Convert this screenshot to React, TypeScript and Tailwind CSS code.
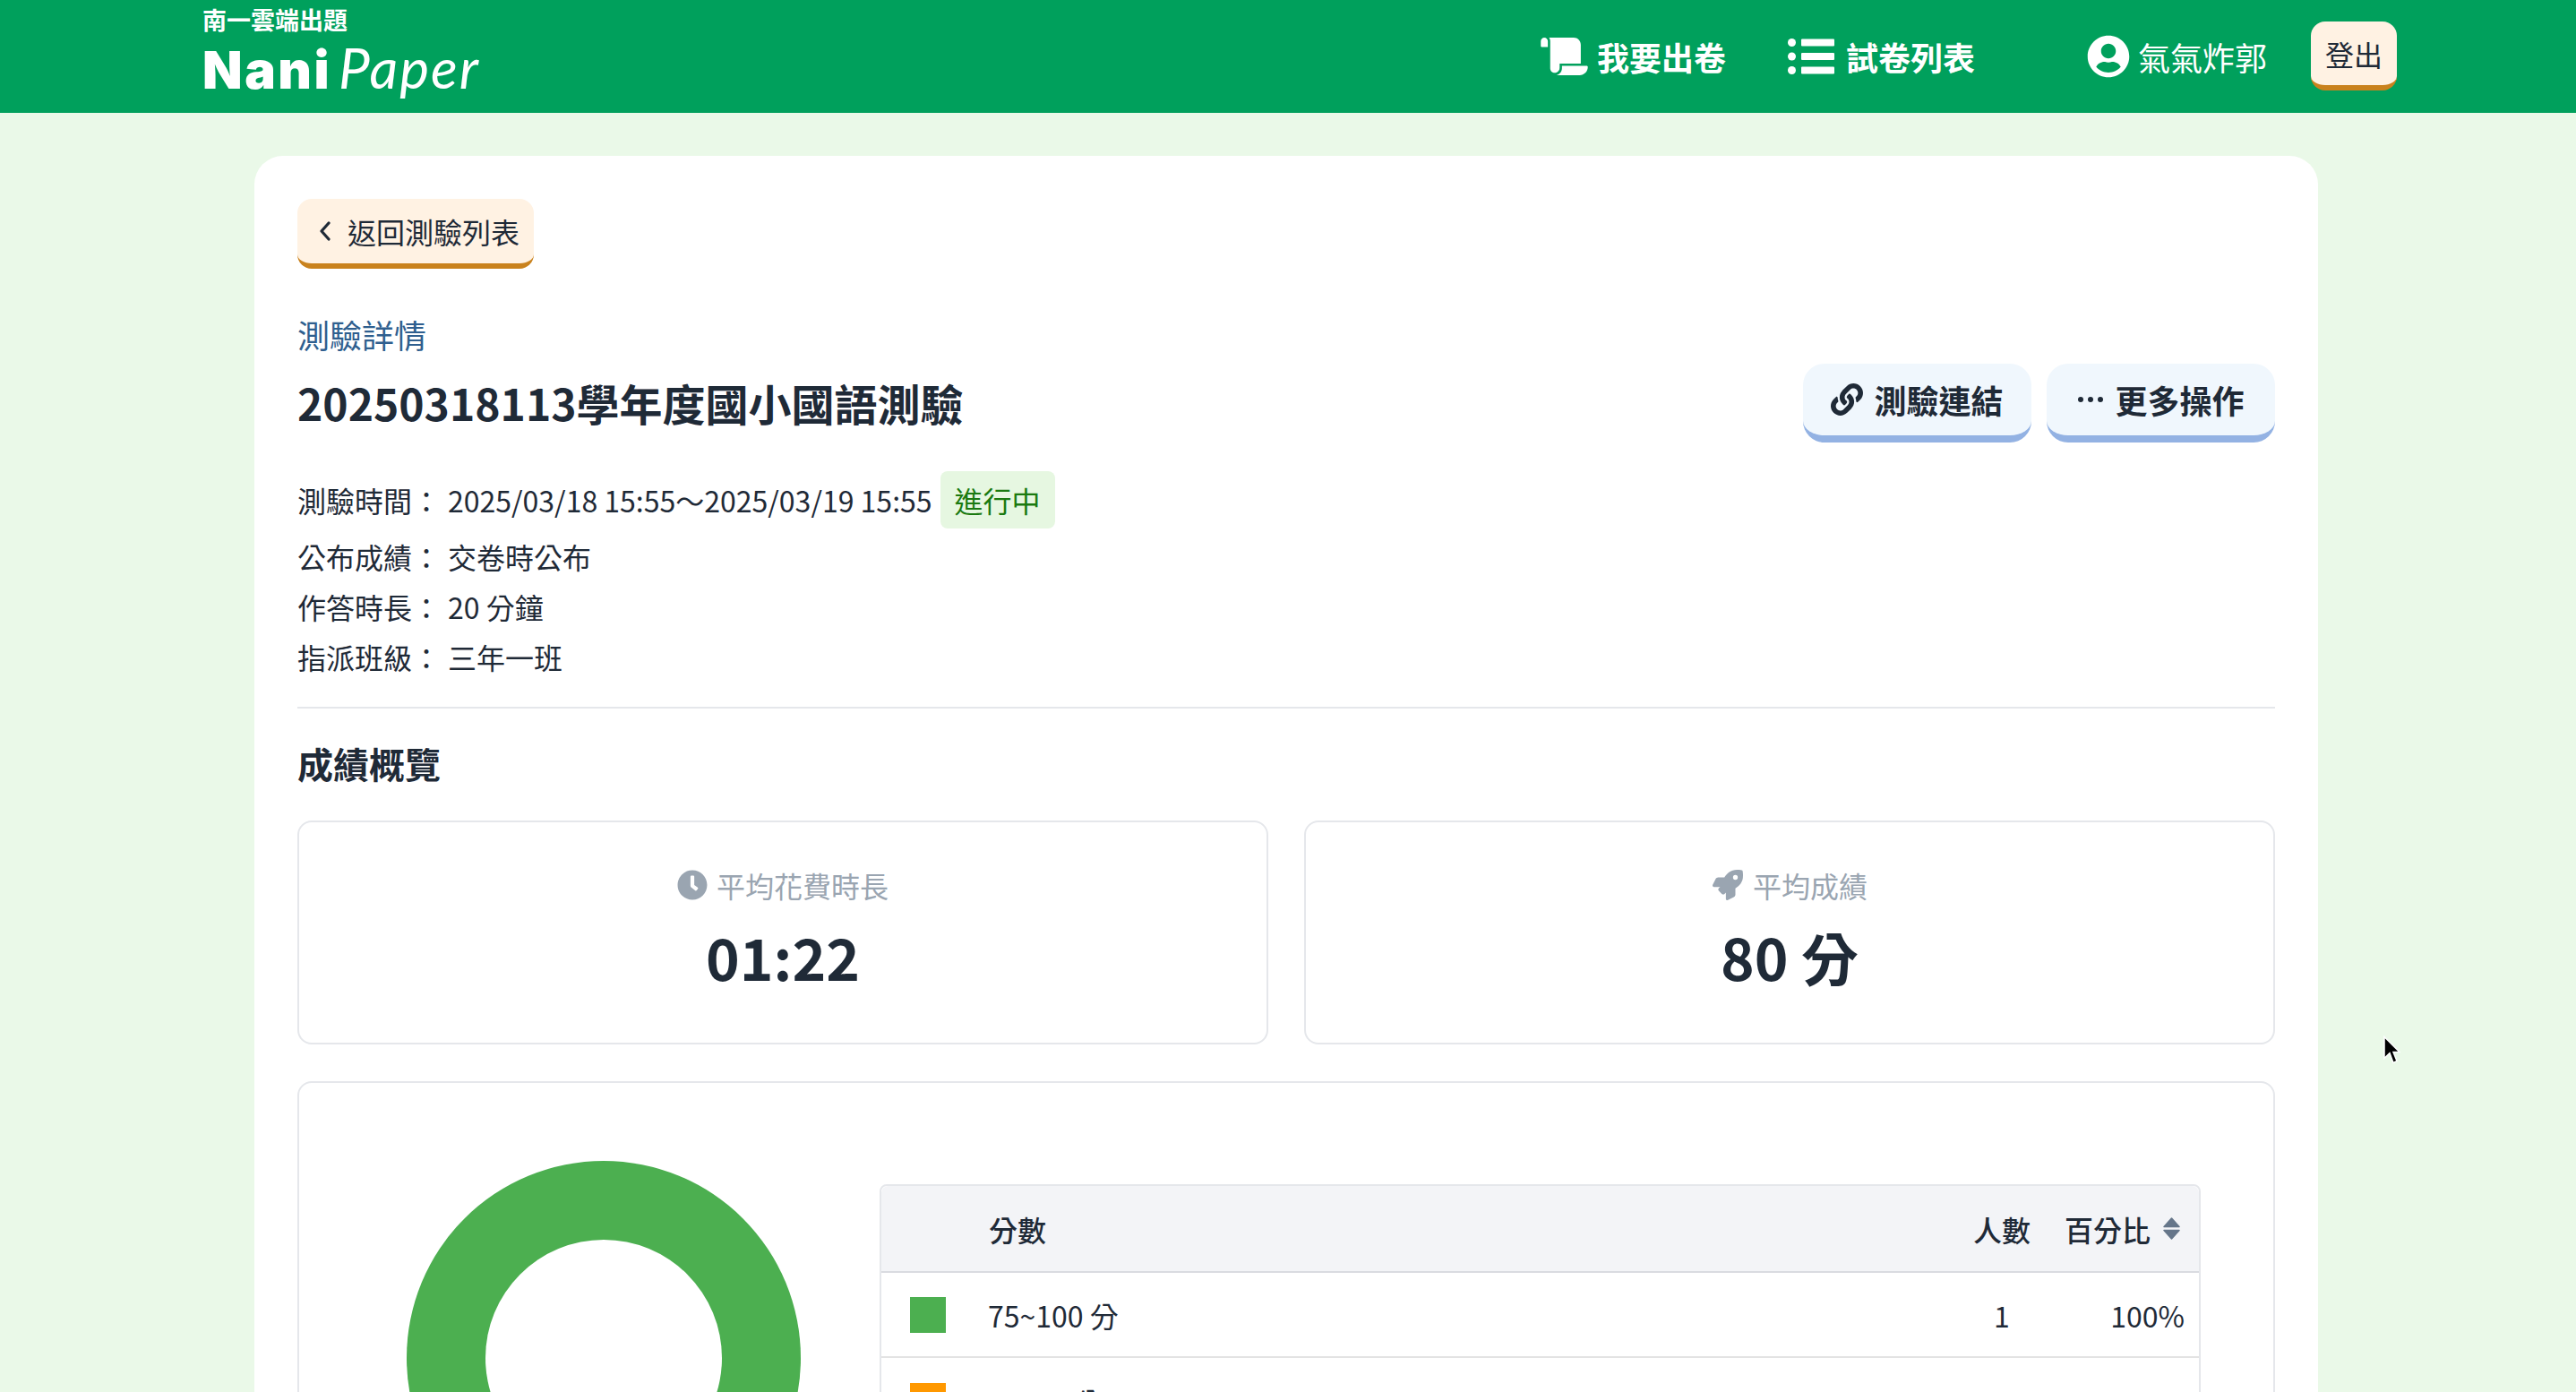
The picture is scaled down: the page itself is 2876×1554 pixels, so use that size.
import type { ReactNode } from 'react'
import { FaClock, FaLink, FaRocket, FaScroll, FaUserCircle } from 'react-icons/fa'

const CJK = "font-['Noto_Sans_CJK_TC','Noto_Sans',sans-serif]"

function NavLink({ icon, label }: { icon: ReactNode; label: string }) {
  return (
    <a className="flex items-center gap-[13px] text-[36px] leading-none font-bold text-white">
      {icon}
      <span>{label}</span>
    </a>
  )
}

function Logo() {
  return (
    <div className="mb-[17px] flex flex-col text-white">
      <span className="h-[26px] text-[27px] leading-[26px] font-bold">南一雲端出題</span>
      <div className="mt-[15px] flex h-[50px] items-baseline leading-[50px]">
        <span className="font-['Inter',sans-serif] text-[58px] font-black tracking-[2.5px]">Nani</span>
        <span className="ml-[8px] font-['Lato',sans-serif] text-[62px] font-normal tracking-[2px] italic">Paper</span>
      </div>
    </div>
  )
}

function ListIcon() {
  return (
    <svg className="h-[40px] w-[52px]" viewBox="0 0 52 40" fill="currentColor">
      <circle cx="4.5" cy="4.5" r="4.5" />
      <circle cx="4.5" cy="20" r="4.5" />
      <circle cx="4.5" cy="35.5" r="4.5" />
      <rect x="15" y="0.5" width="37" height="8" rx="1" />
      <rect x="15" y="16" width="37" height="8" rx="1" />
      <rect x="15" y="31.5" width="37" height="8" rx="1" />
    </svg>
  )
}

function BlueButton({ icon, label }: { icon: ReactNode; label: string }) {
  return (
    <button className="flex h-[88px] w-[255px] items-center justify-center gap-[12px] rounded-[24px] border-b-[8px] border-[#93b2e3] bg-[#f0f7fd] text-[36px] font-semibold text-[#1f2a37]">
      {icon}
      <span>{label}</span>
    </button>
  )
}

function InfoRow({ label, children, className }: { label: string; children: ReactNode; className?: string }) {
  return (
    <div className={`flex items-center text-[32px] leading-[48px] ${className ?? ''}`}>
      <span className="w-[168px] shrink-0">{label}：</span>
      {children}
    </div>
  )
}

function StatCard({ icon, label, value }: { icon: ReactNode; label: string; value: string }) {
  return (
    <div className="flex h-[250px] flex-1 flex-col items-center rounded-[16px] border-2 border-[#e5e7eb] pt-[46px]">
      <div className="flex h-[48px] items-center gap-[10px] text-[32px] text-[#9aa5b1]">
        {icon}
        <span>{label}</span>
      </div>
      <div className="mt-[7px] text-[64px] leading-[96px] font-bold text-[#1f2a37]">{value}</div>
    </div>
  )
}

function ScoreRow({
  color,
  label,
  count,
  percent,
  className,
}: {
  color: string
  label: string
  count: number
  percent: string
  className?: string
}) {
  return (
    <div className={`flex h-[95px] items-center border-b-2 border-[#e3e3e3] pr-[16px] text-[32px] ${className ?? ''}`}>
      <span className={`ml-[32px] h-[40px] w-[40px] ${color}`} />
      <span className="ml-[47px] flex-1">{label}</span>
      <span className="w-[60px] text-center">{count}</span>
      <span className="w-[174px] text-right">{percent}</span>
    </div>
  )
}

export default function App() {
  return (
    <div className={`relative h-screen overflow-hidden bg-[#eaf9e8] ${CJK} text-[#1f2a37]`}>
      <header className="flex h-[126px] items-center justify-between bg-[#00a05c] pr-[200px] pl-[226px]">
        <Logo />
        <nav className="flex items-center">
          <NavLink icon={<FaScroll className="mr-[-3px] h-[42px] w-[53px]" />} label="我要出卷" />
          <div className="ml-[69px]">
            <NavLink icon={<ListIcon />} label="試卷列表" />
          </div>
          <div className="ml-[125px] flex items-center gap-[9px] text-[36px] leading-none text-white">
            <FaUserCircle className="h-[48px] w-[48px]" />
            <span>氣氣炸郭</span>
          </div>
          <button className="mt-[-1px] ml-[49px] h-[77px] w-[96px] rounded-[16px] border-b-[6px] border-[#c9821d] bg-[#fff2e3] text-[32px] text-[#1f2a37]">
            登出
          </button>
        </nav>
      </header>

      <main className="mt-[48px] ml-[284px] w-[2304px] rounded-t-[32px] bg-white px-[48px] pt-[48px] pb-[48px]">
        <button className="flex h-[78px] w-[264px] items-center gap-[18px] rounded-[16px] border-b-[6px] border-[#c9821d] bg-[#fff2e3] pl-[24px] text-[32px]">
          <svg className="h-[22px] w-[14px]" viewBox="0 0 14 22" fill="none" stroke="currentColor" strokeWidth="3.2" strokeLinecap="round" strokeLinejoin="round">
            <polyline points="11,2 3,11 11,20" />
          </svg>
          <span>返回測驗列表</span>
        </button>

        <div className="mt-[46px] text-[36px] leading-[54px] text-[#2f5f8f]">測驗詳情</div>
        <div className="mt-[8px] flex items-start justify-between">
          <h1 className="mt-[5px] text-[48px] leading-[72px] font-bold">20250318113學年度國小國語測驗</h1>
          <div className="mt-[-2px] flex gap-[17px]">
            <BlueButton icon={<FaLink className="h-[36px] w-[36px]" />} label="測驗連結" />
            <BlueButton
              icon={
                <svg className="h-[8px] w-[30px]" viewBox="0 0 30 8" fill="currentColor">
                  <circle cx="4" cy="4" r="3" />
                  <circle cx="15" cy="4" r="3" />
                  <circle cx="26" cy="4" r="3" />
                </svg>
              }
              label="更多操作"
            />
          </div>
        </div>

        <div className="mt-[32px]">
          <InfoRow label="測驗時間">
            <span>2025/03/18 15:55～2025/03/19 15:55</span>
            <span className="ml-[9px] flex h-[64px] w-[128px] items-center justify-center rounded-[8px] bg-[#e6f7e1] text-[#1a7a10]">
              進行中
            </span>
          </InfoRow>
          <InfoRow label="公布成績" className="mt-[7px]">
            <span>交卷時公布</span>
          </InfoRow>
          <InfoRow label="作答時長" className="mt-[8px]">
            <span>20 分鐘</span>
          </InfoRow>
          <InfoRow label="指派班級" className="mt-[8px]">
            <span>三年一班</span>
          </InfoRow>
        </div>

        <hr className="mt-[32px] border-t-2 border-[#e5e7eb]" />

        <h2 className="mt-[31px] text-[40px] leading-[60px] font-bold">成績概覽</h2>

        <div className="mt-[34px] flex gap-[40px]">
          <StatCard icon={<FaClock className="h-[34px] w-[34px]" />} label="平均花費時長" value="01:22" />
          <StatCard icon={<FaRocket className="h-[34px] w-[36px]" />} label="平均成績" value="80 分" />
        </div>

        <section className="mt-[41px] flex h-[600px] items-start rounded-[16px] border-2 border-[#e5e7eb] pt-[87px] pl-[120px]">
          <div className="relative h-[440px] w-[440px] shrink-0 rounded-full bg-[#4caf50]">
            <div className="absolute top-[88px] left-[88px] h-[264px] w-[264px] rounded-full bg-white" />
          </div>
          <div className="mt-[26px] ml-[88px] w-[1475px] rounded-[8px] border-2 border-[#e5e7eb] text-[#1f2a37]">
            <div className="flex h-[97px] items-center rounded-t-[8px] border-b-2 border-[#d9dbe0] bg-[#f3f4f7] pr-[16px] text-[32px] font-medium">
              <span className="ml-[120px] flex-1">分數</span>
              <span className="w-[64px] text-center">人數</span>
              <span className="ml-[38px] flex w-[134px] items-center gap-[14px]">
                百分比
                <svg className="h-[25px] w-[19px] text-[#66768a]" viewBox="0 0 19 25" fill="currentColor" stroke="currentColor" strokeWidth="1.5" strokeLinejoin="round">
                  <polygon points="9.5,1 18,10.5 1,10.5" />
                  <polygon points="1,14.5 18,14.5 9.5,24" />
                </svg>
              </span>
            </div>
            <ScoreRow color="bg-[#4caf50]" label="75~100 分" count={1} percent="100%" />
            <ScoreRow color="bg-[#ff9800]" label="50~74 分" count={0} percent="0%" className="pt-[3px]" />
          </div>
        </section>
      </main>

      <svg className="absolute top-[1155px] left-[2660px] h-[35px] w-[20px]" viewBox="0 0 20 34">
        <path d="M2 2v24l6-6 4 11 4-2-4-10h7z" fill="#000" stroke="#fff" strokeWidth="1.5" />
      </svg>
    </div>
  )
}
